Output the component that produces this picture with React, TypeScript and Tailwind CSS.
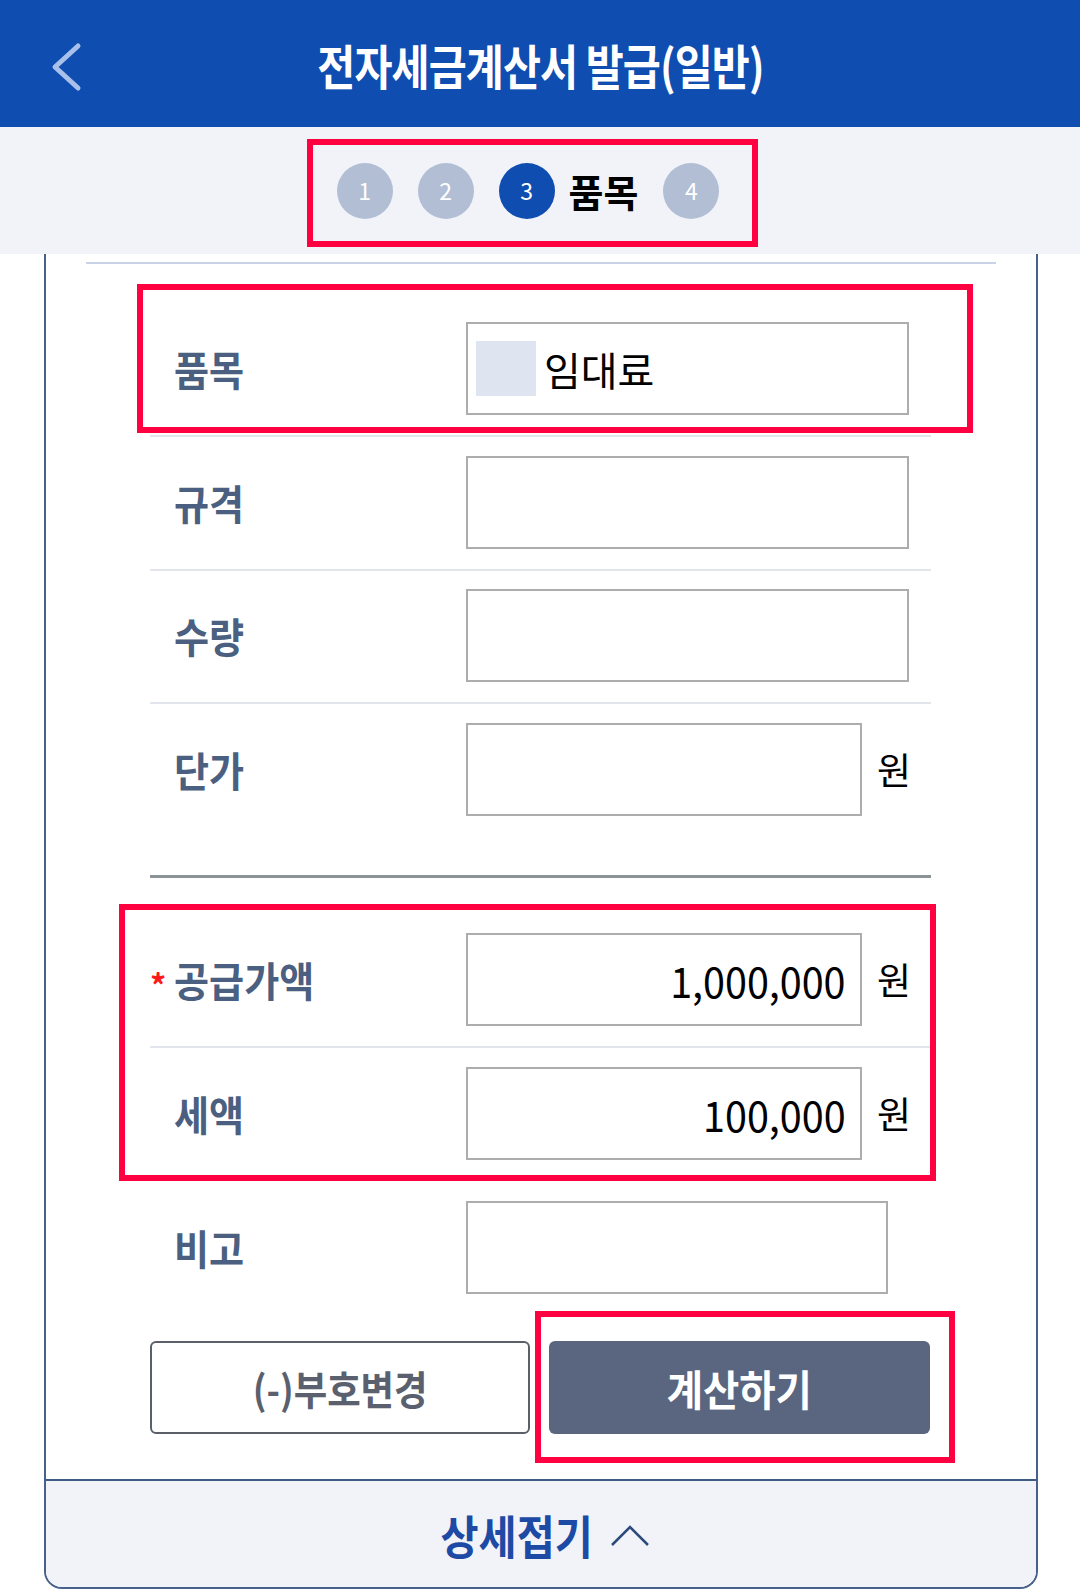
import React from 'react';

const FONT = "font-['Noto_Sans_CJK_KR',sans-serif]";

function Label({ text, required }: { text: string; required?: boolean }) {
  return (
    <div className="w-[316px] shrink-0 pl-[24px] relative flex items-center">
      {required && (
        <span className="absolute left-0 top-[50%] -translate-y-[38%] text-[#ff1a1a] text-[32px] font-bold leading-none">*</span>
      )}
      <span className="inline-block origin-left scale-x-[0.93] text-[41px] font-bold text-[#4b5f80] leading-none whitespace-nowrap">
        {text}
      </span>
    </div>
  );
}

function Box({ w, children, right }: { w: string; children?: React.ReactNode; right?: boolean }) {
  return (
    <div className={`${w} h-[93px] border-2 border-[#adadad] bg-white flex items-center ${right ? 'justify-end pr-[14px]' : ''}`}>
      {children}
    </div>
  );
}

function Won() {
  return <span className="ml-[15px] text-[37px] leading-none text-black">원</span>;
}

export default function App() {
  return (
    <div className={`relative w-[1080px] h-[1593px] bg-white overflow-hidden ${FONT}`}>
      {/* Header */}
      <div className="h-[127px] bg-[#0f4db0] relative flex items-center justify-center">
        <svg className="absolute left-[48px] top-[42px]" width="36" height="50" viewBox="0 0 36 50">
          <path d="M30 4 L7 25 L30 46" fill="none" stroke="#a9c1ea" strokeWidth="5" strokeLinecap="round" strokeLinejoin="round" />
        </svg>
        <span className="inline-block scale-x-[0.86] text-white font-bold text-[48px] leading-none tracking-[-1px] whitespace-nowrap">
          전자세금계산서 발급(일반)
        </span>
      </div>

      {/* Steps */}
      <div className="h-[127px] bg-[#f1f3f9] flex items-center justify-center gap-[25px] pr-[24px]">
        <div className="w-[56px] h-[56px] rounded-full bg-[#b1bed4] flex items-center justify-center text-white text-[23px]">1</div>
        <div className="w-[56px] h-[56px] rounded-full bg-[#b1bed4] flex items-center justify-center text-white text-[23px]">2</div>
        <div className="flex items-center gap-[14px]">
          <div className="w-[56px] h-[56px] rounded-full bg-[#0f4db0] flex items-center justify-center text-white text-[23px]">3</div>
          <span className="text-[38px] font-bold text-black leading-none">품목</span>
        </div>
        <div className="w-[56px] h-[56px] rounded-full bg-[#b1bed4] flex items-center justify-center text-white text-[23px]">4</div>
      </div>

      {/* Card */}
      <div className="ml-[44px] w-[994px] border-x-2 border-b-2 border-[#47618a] rounded-b-[18px] overflow-hidden">
        <div className="mx-[40px] mt-[8px] h-[2px] bg-[#c9d3e5]" />
        <div className="ml-[104px] mr-[105px] pt-[38px]">
          {/* 품목 */}
          <div className="flex pt-[20px] pb-[20px]">
            <Label text="품목" />
            <Box w="w-[443px]">
              <div className="ml-[8px] w-[60px] h-[55px] bg-[#dee4f0]" />
              <span className="ml-[8px] text-[40px] leading-none text-black">임대료</span>
            </Box>
          </div>
          {/* 규격 */}
          <div className="flex border-t-2 border-[#e3e5ec] pt-[19px] pb-[20px]">
            <Label text="규격" />
            <Box w="w-[443px]" />
          </div>
          {/* 수량 */}
          <div className="flex border-t-2 border-[#e3e5ec] pt-[18px] pb-[20px]">
            <Label text="수량" />
            <Box w="w-[443px]" />
          </div>
          {/* 단가 */}
          <div className="flex items-center border-t-2 border-[#e3e5ec] pt-[19px] pb-[59px]">
            <Label text="단가" />
            <Box w="w-[396px]" />
            <Won />
          </div>
          <div className="h-[3px] bg-[#8b9397]" />
          {/* 공급가액 */}
          <div className="flex items-center pt-[55px] pb-[20px]">
            <Label text="공급가액" required />
            <Box w="w-[396px]" right>
              <span className="inline-block origin-right scale-x-[0.94] text-[42px] leading-none text-black">1,000,000</span>
            </Box>
            <Won />
          </div>
          {/* 세액 */}
          <div className="flex items-center border-t-2 border-[#e3e5ec] pt-[19px] pb-[20px]">
            <Label text="세액" />
            <Box w="w-[396px]" right>
              <span className="inline-block origin-right scale-x-[0.94] text-[42px] leading-none text-black">100,000</span>
            </Box>
            <Won />
          </div>
          {/* 비고 */}
          <div className="flex pt-[21px]">
            <Label text="비고" />
            <Box w="w-[422px]" />
          </div>
          {/* Buttons */}
          <div className="flex gap-[19px] mt-[47px] mb-[45px]">
            <button className="w-[380px] h-[93px] border-2 border-[#5b6068] rounded-[6px] bg-white flex items-center justify-center">
              <span className="inline-block scale-x-[0.91] text-[40px] font-semibold text-[#5a606d] leading-none whitespace-nowrap">(-)부호변경</span>
            </button>
            <button className="w-[381px] h-[93px] rounded-[6px] bg-[#5a667f] flex items-center justify-center">
              <span className="inline-block scale-x-[0.94] text-[42px] font-bold text-white leading-none whitespace-nowrap">계산하기</span>
            </button>
          </div>
        </div>
        {/* Footer */}
        <div className="border-t-2 border-[#3e5b84] bg-[#f1f3f9] h-[108px] flex items-center justify-center gap-[14px]">
          <span className="inline-block scale-x-[0.9] text-[46px] font-bold text-[#1d4aa4] leading-none whitespace-nowrap">상세접기</span>
          <svg width="40" height="24" viewBox="0 0 40 24" className="-ml-[6px] mt-[4px]">
            <path d="M2 21 L20 3 L38 21" fill="none" stroke="#2d4a7c" strokeWidth="2.5" />
          </svg>
        </div>
      </div>

      {/* Annotation boxes */}
      <div className="absolute left-[307px] top-[139px] w-[451px] h-[108px] border-[6px] border-[#ff0040]" />
      <div className="absolute left-[137px] top-[284px] w-[836px] h-[149px] border-[6px] border-[#ff0040]" />
      <div className="absolute left-[119px] top-[904px] w-[817px] h-[277px] border-[6px] border-[#ff0040]" />
      <div className="absolute left-[535px] top-[1311px] w-[420px] h-[152px] border-[6px] border-[#ff0040]" />
    </div>
  );
}
